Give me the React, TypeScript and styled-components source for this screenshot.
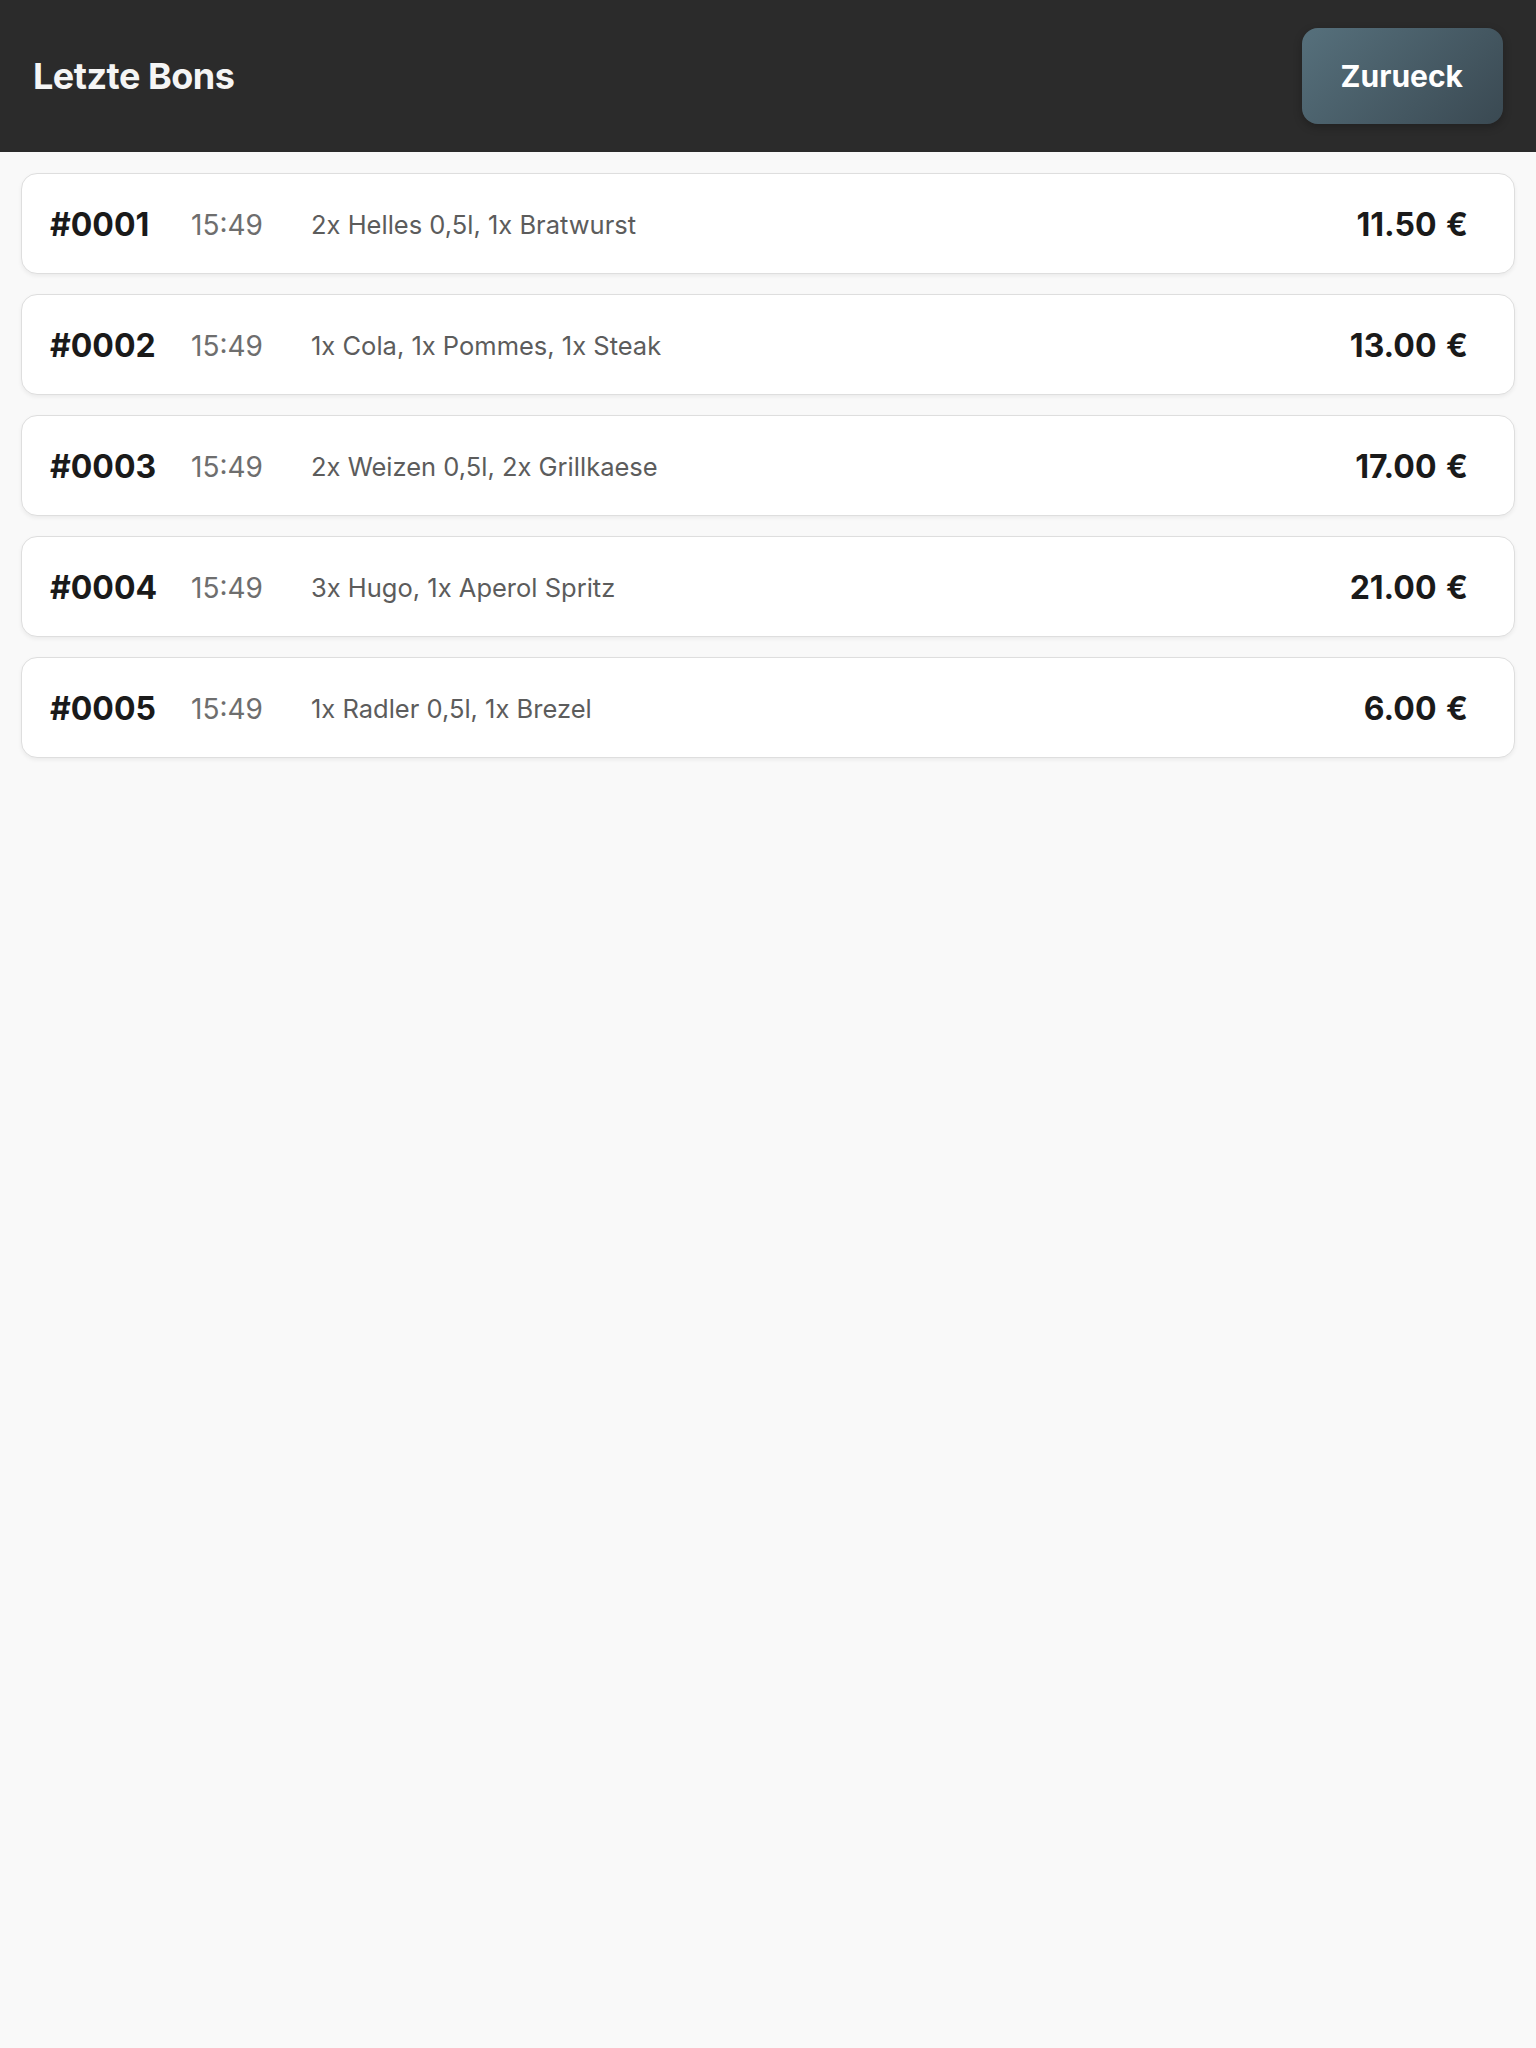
import React from "react";
import styled, { createGlobalStyle } from "styled-components";

const GlobalStyle = createGlobalStyle`
  html, body {
    margin: 0;
    padding: 0;
    background: #f9f9f9;
    font-family: Inter, "Noto Sans", "Liberation Sans", sans-serif;
  }
  * { box-sizing: border-box; }
`;

const Page = styled.div`
  min-height: 2048px;
  background: #f9f9f9;
`;

const Header = styled.header`
  height: 152px;
  background: #2b2b2b;
  display: flex;
  align-items: center;
  justify-content: space-between;
  padding: 0 33px 0 33px;
`;

const Title = styled.h1`
  margin: 0;
  color: #f5f5f5;
  font-size: 36px;
  font-weight: 700;
  letter-spacing: -0.5px;
`;

const BackButton = styled.button`
  height: 96px;
  padding: 0 40px 0 39px;
  border: none;
  border-radius: 16px;
  background: linear-gradient(135deg, #56707c 0%, #3a4952 100%);
  box-shadow: 0 3px 8px rgba(0, 0, 0, 0.25);
  color: #ffffff;
  font-family: inherit;
  font-size: 30px;
  font-weight: 700;
  cursor: pointer;
`;

const List = styled.main`
  display: flex;
  flex-direction: column;
  gap: 20px;
  padding: 21px 21px;
`;

const Card = styled.div`
  display: flex;
  align-items: center;
  height: 101px;
  padding: 2px 46px 0 28px;
  background: #ffffff;
  border: 1px solid #dedede;
  border-radius: 16px;
  box-shadow: 0 2px 4px rgba(0, 0, 0, 0.06);
`;

const BonId = styled.span`
  width: 141px;
  flex-shrink: 0;
  color: #1a1a1a;
  font-size: 32px;
  font-weight: 700;
`;

const Time = styled.span`
  width: 120px;
  flex-shrink: 0;
  color: #6e6e6e;
  font-size: 28px;
  font-weight: 400;
`;

const Items = styled.span`
  flex: 1;
  color: #5c5c5c;
  font-size: 25.5px;
  font-weight: 400;
`;

const Price = styled.span`
  color: #1a1a1a;
  font-size: 32px;
  font-weight: 700;
  text-align: right;
  word-spacing: 2px;
`;

const bons = [
  { id: "#0001", time: "15:49", items: "2x Helles 0,5l, 1x Bratwurst", price: "11.50 €" },
  { id: "#0002", time: "15:49", items: "1x Cola, 1x Pommes, 1x Steak", price: "13.00 €" },
  { id: "#0003", time: "15:49", items: "2x Weizen 0,5l, 2x Grillkaese", price: "17.00 €" },
  { id: "#0004", time: "15:49", items: "3x Hugo, 1x Aperol Spritz", price: "21.00 €" },
  { id: "#0005", time: "15:49", items: "1x Radler 0,5l, 1x Brezel", price: "6.00 €" },
];

export default function App() {
  return (
    <Page>
      <GlobalStyle />
      <Header>
        <Title>Letzte Bons</Title>
        <BackButton>Zurueck</BackButton>
      </Header>
      <List>
        {bons.map((b) => (
          <Card key={b.id}>
            <BonId>{b.id}</BonId>
            <Time>{b.time}</Time>
            <Items>{b.items}</Items>
            <Price>{b.price}</Price>
          </Card>
        ))}
      </List>
    </Page>
  );
}
